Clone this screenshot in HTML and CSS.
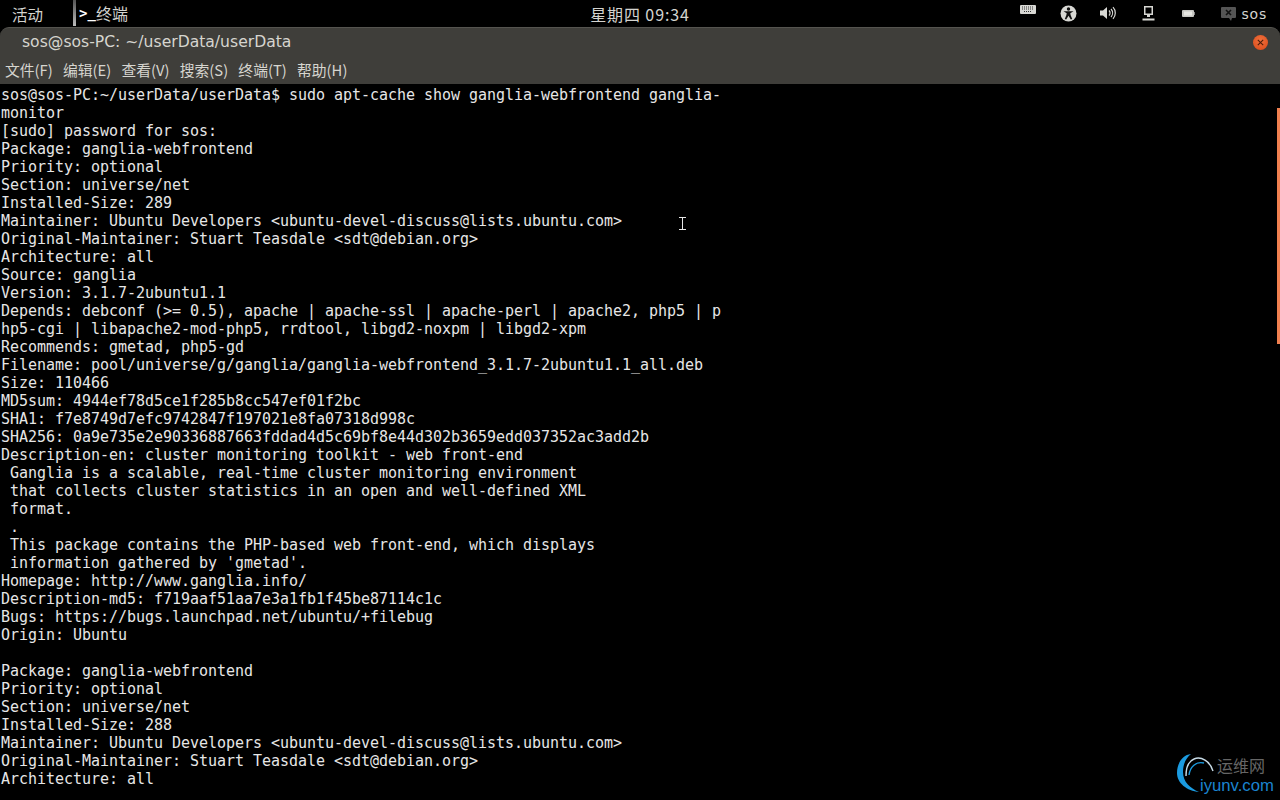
FILE: index.html
```html
<!DOCTYPE html>
<html lang="zh">
<head>
<meta charset="utf-8">
<title>终端</title>
<link rel="stylesheet" href="styles.css">
</head>
<body>
<div class="desktop">
  <header class="topbar">
    <div class="left">
      <span class="activities">活动</span>
      <div class="app"><span class="app-edge"></span><span class="app-icon">&gt;_</span><span>终端</span></div>
    </div>
    <div class="clock">星期四 09:34</div>
    <div class="tray">
      <svg class="i-kbd" width="16" height="10" viewBox="0 0 16 10"><rect x="0" y="0" width="16" height="9" rx="1" fill="#d8d8d4"/><path d="M2 2h12M2 4h12M4 6.500h8" stroke="#333" stroke-width="1" stroke-dasharray="1 1"/></svg>
      <svg class="i-acc" width="17" height="17" viewBox="0 0 17 17"><circle cx="8.500" cy="8.500" r="8" fill="#d8d8d4"/><circle cx="8.500" cy="4" r="1.700" fill="#111"/><path d="M3.500 6.200 L13.500 6.200 L10.300 8.200 L10.600 10 L12.200 14 L10.800 14.400 L8.500 10.800 L6.200 14.400 L4.800 14 L6.400 10 L6.700 8.200Z" fill="#111"/></svg>
      <svg class="i-vol" width="16" height="14" viewBox="0 0 16 14"><path d="M0 4.500h3L7 1v12L3 9.500H0z" fill="#d8d8d4"/><path d="M9 4.500a3.500 3.500 0 0 1 0 5M11 3a6 6 0 0 1 0 8M13 1.200a8.500 8.500 0 0 1 0 11.600" stroke="#d8d8d4" stroke-width="1.200" fill="none"/></svg>
      <svg class="i-net" width="13" height="15" viewBox="0 0 13 15"><path d="M2 0h9v9H8v2H5V9H2zM3.500 1.500v6h6v-6z" fill="#d8d8d4" fill-rule="evenodd"/><rect x="0.500" y="12.500" width="12" height="2" fill="#d8d8d4"/></svg>
      <svg class="i-bat" width="13" height="7" viewBox="0 0 13 7"><rect x="0" y="0" width="12" height="7" rx="1" fill="#c8c8c4"/><rect x="2" y="1.500" width="8" height="4" fill="#e8e8e4"/><rect x="12" y="2" width="1" height="3" fill="#888"/></svg>
      <div class="user">
        <svg width="15" height="14" viewBox="0 0 15 14"><path d="M1 0h13a1 1 0 0 1 1 1v9a1 1 0 0 1-1 1h-3l-1 3-2-3H1a1 1 0 0 1-1-1V1a1 1 0 0 1 1-1z" fill="#555"/><path d="M5 3l5 5M10 3l-5 5" stroke="#111" stroke-width="1.600"/></svg>
        <span>sos</span>
      </div>
    </div>
  </header>
  <main class="window">
    <div class="titlebar">
      <span class="title">sos@sos-PC: ~/userData/userData</span>
      <span class="close"><svg width="7" height="7" viewBox="0 0 7 7"><path d="M.8.8l5.400 5.400M6.200.8L.8 6.200" stroke="#4a1c0a" stroke-width="1.100"/></svg></span>
    </div>
    <nav class="menubar">
      <span>文件(F)</span><span>编辑(E)</span><span>查看(V)</span><span>搜索(S)</span><span>终端(T)</span><span>帮助(H)</span>
    </nav>
    <div class="terminal">
<pre class="output">sos@sos-PC:~/userData/userData$ sudo apt-cache show ganglia-webfrontend ganglia-
monitor
[sudo] password for sos: 
Package: ganglia-webfrontend
Priority: optional
Section: universe/net
Installed-Size: 289
Maintainer: Ubuntu Developers &lt;ubuntu-devel-discuss@lists.ubuntu.com&gt;
Original-Maintainer: Stuart Teasdale &lt;sdt@debian.org&gt;
Architecture: all
Source: ganglia
Version: 3.1.7-2ubuntu1.1
Depends: debconf (&gt;= 0.5), apache | apache-ssl | apache-perl | apache2, php5 | p
hp5-cgi | libapache2-mod-php5, rrdtool, libgd2-noxpm | libgd2-xpm
Recommends: gmetad, php5-gd
Filename: pool/universe/g/ganglia/ganglia-webfrontend_3.1.7-2ubuntu1.1_all.deb
Size: 110466
MD5sum: 4944ef78d5ce1f285b8cc547ef01f2bc
SHA1: f7e8749d7efc9742847f197021e8fa07318d998c
SHA256: 0a9e735e2e90336887663fddad4d5c69bf8e44d302b3659edd037352ac3add2b
Description-en: cluster monitoring toolkit - web front-end
 Ganglia is a scalable, real-time cluster monitoring environment
 that collects cluster statistics in an open and well-defined XML
 format.
 .
 This package contains the PHP-based web front-end, which displays
 information gathered by 'gmetad'.
Homepage: http://www.ganglia.info/
Description-md5: f719aaf51aa7e3a1fb1f45be87114c1c
Bugs: https://bugs.launchpad.net/ubuntu/+filebug
Origin: Ubuntu

Package: ganglia-webfrontend
Priority: optional
Section: universe/net
Installed-Size: 288
Maintainer: Ubuntu Developers &lt;ubuntu-devel-discuss@lists.ubuntu.com&gt;
Original-Maintainer: Stuart Teasdale &lt;sdt@debian.org&gt;
Architecture: all</pre>
      <div class="scrollbar"></div>
      <svg class="ibeam" width="7" height="13" viewBox="0 0 7 13"><path d="M0 .5h7M0 12.500h7M3.500 .5v12" stroke="#e8e8e8" stroke-width="1" fill="none"/></svg>
      <div class="watermark">
        <svg class="wm-logo" width="40" height="42" viewBox="0 0 40 42"><path d="M14 1C5 2 0 11 0 20C0 30 10 38 22 39C13 35 6 29 6 19C6 11 9 5 14 1Z" fill="#1b9be0"/><path d="M36 18C33 8 24 3 17 6C12 8 9 14 9 23" stroke="#c8dce8" stroke-width="1.400" fill="none"/><path d="M12 22C13 14 19 8 27 10" stroke="#1b9be0" stroke-width="1.400" fill="none"/></svg>
        <span class="wm-cn">运维网</span>
        <span class="wm-en">iyunv.com</span>
      </div>
    </div>
  </main>
</div>
</body>
</html>
```
FILE: styles.css
```css
* { box-sizing: border-box; }
html, body { margin: 0; padding: 0; background: #000; }
.desktop { width: 1280px; height: 800px; display: flex; flex-direction: column; overflow: hidden; background: #000; }
.topbar { height: 27px; flex: none; display: grid; grid-template-columns: 1fr auto 1fr; align-items: center; background: #000; color: #d4d4d0; font-family: "Noto Sans CJK SC", "Noto Sans", sans-serif; font-size: 15.5px; }
.left { display: flex; align-items: center; height: 27px; }
.activities { margin-left: 12px; width: 61px; }
.app { display: flex; align-items: center; height: 26px; align-self: flex-start; font-size: 16px; }
.app-edge { width: 3px; height: 26px; background: linear-gradient(#555, #bbb); margin-right: 3px; }
.app-icon { font-family: "DejaVu Sans Mono", monospace; font-weight: bold; font-size: 14px; width: 17px; color: #fff; }
.clock { font-size: 16px; letter-spacing: .9px; }
.tray { display: flex; align-items: center; justify-content: flex-end; height: 27px; }
.i-kbd { margin-right: 24px; margin-top: -8px; }
.i-acc { margin-right: 23px; }
.i-vol { margin-right: 26px; margin-top: -1px; }
.i-net { margin-right: 27px; margin-top: -1px; }
.i-bat { margin-right: 26px; }
.user { display: flex; align-items: center; gap: 5px; margin-right: 13px; font-family: "DejaVu Sans", sans-serif; font-size: 14px; letter-spacing: .8px; }
.window { flex: 1; display: flex; flex-direction: column; min-height: 0; }
.titlebar { height: 30px; flex: none; padding: 0 12px 2px 22px; display: flex; align-items: center; justify-content: space-between; background: #3f3e3a; border-top: 1px solid #55544f; border-radius: 9px 9px 0 0; color: #d6d5cf; font-family: "DejaVu Sans", sans-serif; font-size: 15.6px; }
.close { width: 15px; height: 15px; border-radius: 50%; background: radial-gradient(circle at 50% 35%, #f0703c, #d84818); display: flex; align-items: center; justify-content: center; margin-top: 2px; }
.menubar { height: 27px; flex: none; display: flex; gap: 10.2px; padding: 0 0 2px 5px; align-items: center; background: #3f3e3a; color: #d6d5cf; font-family: "Noto Sans CJK SC", "Noto Sans", sans-serif; font-size: 14.8px; }
.terminal { flex: 1; position: relative; background: #000; min-height: 0; overflow: hidden; }
.output { margin: 0; padding: 2px 0 0 1px; font-family: "DejaVu Sans Mono", monospace; font-size: 15px; letter-spacing: -.03px; line-height: 18px; color: #e6e6e6; }
.scrollbar { position: absolute; top: 24px; right: 0; width: 3px; height: 236px; background: #f08050; }
.ibeam { position: absolute; left: 679px; top: 133px; }
.watermark { position: absolute; right: 0; bottom: 0; width: 103px; height: 47px; }
.wm-logo { position: absolute; left: 0; top: 0; }
.wm-cn { position: absolute; left: 40px; top: 3px; font-family: "Noto Sans CJK SC", sans-serif; font-size: 16px; color: #666; line-height: 19px; }
.wm-en { position: absolute; left: 23px; top: 24px; font-family: "Liberation Sans", sans-serif; font-size: 16.7px; color: #1b84d0; line-height: 18px; }
```
